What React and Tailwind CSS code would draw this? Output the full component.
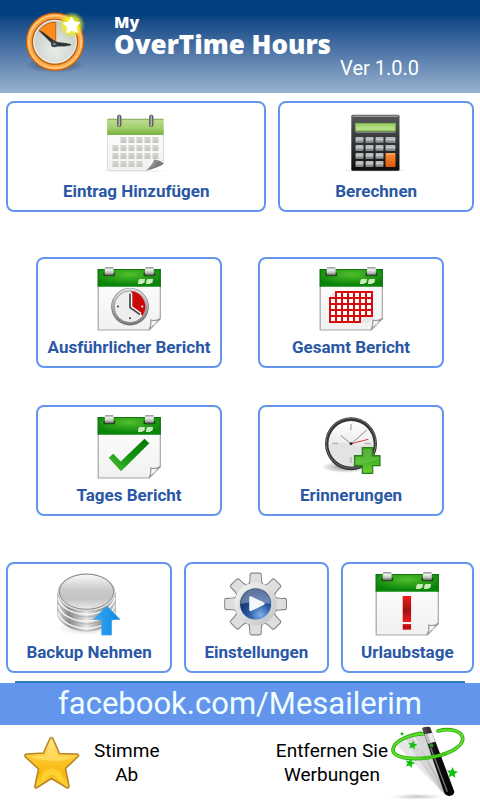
import React from "react";

const Gradients = () => (
  <svg className="absolute w-0 h-0" aria-hidden="true">
    <defs>
      <radialGradient id="greenTop" cx="50%" cy="30%" r="60%">
        <stop offset="0" stopColor="#52bf2c" />
        <stop offset="1" stopColor="#0a850a" />
      </radialGradient>
      <linearGradient id="paper" x1="0" y1="0" x2="0" y2="1">
        <stop offset="0" stopColor="#ffffff" />
        <stop offset="1" stopColor="#f1f1f1" />
      </linearGradient>
      <linearGradient id="clip" x1="0" y1="0" x2="0" y2="1">
        <stop offset="0" stopColor="#777777" />
        <stop offset="0.25" stopColor="#f2f2f2" />
        <stop offset="0.7" stopColor="#bdbdbd" />
        <stop offset="1" stopColor="#555555" />
      </linearGradient>
      <linearGradient id="check" x1="1" y1="0" x2="0" y2="1">
        <stop offset="0" stopColor="#067a06" />
        <stop offset="0.5" stopColor="#119211" />
        <stop offset="1" stopColor="#4cc236" />
      </linearGradient>
      <linearGradient id="alert" x1="0" y1="0" x2="0" y2="1">
        <stop offset="0" stopColor="#f51c1c" />
        <stop offset="0.55" stopColor="#9c1212" />
        <stop offset="1" stopColor="#f51c1c" />
      </linearGradient>
      <linearGradient id="lime" x1="0" y1="0" x2="0" y2="1">
        <stop offset="0" stopColor="#bfdc98" />
        <stop offset="0.55" stopColor="#a3cf6c" />
        <stop offset="1" stopColor="#74b43c" />
      </linearGradient>
      <linearGradient id="ring" x1="0" y1="0" x2="1" y2="0">
        <stop offset="0" stopColor="#555555" />
        <stop offset="0.5" stopColor="#c4c4c4" />
        <stop offset="1" stopColor="#4a4a4a" />
      </linearGradient>
      <linearGradient id="cell" x1="0" y1="0" x2="0" y2="1">
        <stop offset="0" stopColor="#dad6d0" />
        <stop offset="1" stopColor="#c6c4c0" />
      </linearGradient>
      <linearGradient id="darkBody" x1="0" y1="0" x2="0" y2="1">
        <stop offset="0" stopColor="#57585a" />
        <stop offset="0.5" stopColor="#333436" />
        <stop offset="1" stopColor="#0c0c0c" />
      </linearGradient>
      <linearGradient id="key" x1="0" y1="0" x2="0" y2="1">
        <stop offset="0" stopColor="#b9bbbd" />
        <stop offset="0.5" stopColor="#aaadaf" />
        <stop offset="1" stopColor="#717477" />
      </linearGradient>
      <linearGradient id="orangeKey" x1="0" y1="0" x2="0" y2="1">
        <stop offset="0" stopColor="#ff8c3a" />
        <stop offset="1" stopColor="#d95a0b" />
      </linearGradient>
      <linearGradient id="face" x1="0" y1="0" x2="0" y2="1">
        <stop offset="0" stopColor="#ffffff" />
        <stop offset="1" stopColor="#d9d9d9" />
      </linearGradient>
      <linearGradient id="rim" x1="0" y1="0" x2="0" y2="1">
        <stop offset="0" stopColor="#e4e4e4" />
        <stop offset="1" stopColor="#777777" />
      </linearGradient>
      <linearGradient id="disk" x1="0" y1="0" x2="0" y2="1">
        <stop offset="0" stopColor="#fafafa" />
        <stop offset="0.45" stopColor="#c9cacb" />
        <stop offset="0.7" stopColor="#c2c3c4" />
        <stop offset="1" stopColor="#ececec" />
      </linearGradient>
      <linearGradient id="diskSide" x1="0" y1="0" x2="1" y2="0">
        <stop offset="0" stopColor="#dcdcdc" />
        <stop offset="0.2" stopColor="#858687" />
        <stop offset="0.5" stopColor="#e8e8e8" />
        <stop offset="0.8" stopColor="#858687" />
        <stop offset="1" stopColor="#d6d6d6" />
      </linearGradient>
      <linearGradient id="blueArrow" x1="0" y1="0" x2="1" y2="0">
        <stop offset="0" stopColor="#35aaf5" />
        <stop offset="1" stopColor="#0f85e2" />
      </linearGradient>
      <linearGradient id="gear" x1="0" y1="0" x2="1" y2="1">
        <stop offset="0" stopColor="#f6f6f6" />
        <stop offset="0.5" stopColor="#dcdcdc" />
        <stop offset="1" stopColor="#c2c2c2" />
      </linearGradient>
      <radialGradient id="play" cx="65%" cy="85%" r="80%">
        <stop offset="0" stopColor="#7fb2ee" />
        <stop offset="0.45" stopColor="#2a58a2" />
        <stop offset="1" stopColor="#0d2a5e" />
      </radialGradient>
      <linearGradient id="plus" x1="0" y1="0" x2="0" y2="1">
        <stop offset="0" stopColor="#35951c" />
        <stop offset="0.5" stopColor="#44b322" />
        <stop offset="1" stopColor="#66cf35" />
      </linearGradient>
      <linearGradient id="gold" x1="0" y1="0" x2="0" y2="1">
        <stop offset="0" stopColor="#ffe98a" />
        <stop offset="0.45" stopColor="#fdc62b" />
        <stop offset="0.7" stopColor="#f9b60c" />
        <stop offset="1" stopColor="#ffd83a" />
      </linearGradient>
      <radialGradient id="glow">
        <stop offset="0" stopColor="#ffff20" />
        <stop offset="0.6" stopColor="#f0f020" stopOpacity="0.8" />
        <stop offset="1" stopColor="#c8dc30" stopOpacity="0" />
      </radialGradient>
      <radialGradient id="shade">
        <stop offset="0" stopColor="#000000" stopOpacity="0.45" />
        <stop offset="1" stopColor="#000000" stopOpacity="0" />
      </radialGradient>
      <radialGradient id="logoFace" cx="50%" cy="70%" r="70%">
        <stop offset="0" stopColor="#e9ece6" />
        <stop offset="1" stopColor="#c3c8c2" />
      </radialGradient>
      <linearGradient id="wand" x1="0" y1="0" x2="1" y2="0">
        <stop offset="0" stopColor="#555555" />
        <stop offset="0.4" stopColor="#111111" />
        <stop offset="1" stopColor="#000000" />
      </linearGradient>
      <linearGradient id="ghost" x1="0" y1="0" x2="0" y2="1">
        <stop offset="0" stopColor="#bbbbbb" stopOpacity="0.6" />
        <stop offset="1" stopColor="#999999" stopOpacity="0.35" />
      </linearGradient>
    </defs>
  </svg>
);

const Icon = ({ children }) => (
  <svg className="w-16 h-16" viewBox="0 0 64 64" aria-hidden="true">
    {children}
  </svg>
);

const LogoIcon = () => (
  <svg className="w-16 h-16 shrink-0" viewBox="0 0 64 64" aria-hidden="true">
    <ellipse cx="31" cy="55" rx="30" ry="8" fill="url(#shade)" />
    <circle cx="31" cy="31.7" r="28.6" fill="#ffa63d" stroke="#c25f10" strokeWidth="1.2" />
    <circle cx="31" cy="31.7" r="26.2" fill="none" stroke="#ffc886" strokeWidth="1.6" />
    <circle cx="31" cy="31.7" r="22.6" fill="url(#logoFace)" stroke="#bd5d14" strokeWidth="1.4" />
    <circle cx="31" cy="31.7" r="21.2" fill="none" stroke="#f3f4f0" strokeWidth="0.9" />
    <path d="M31.7 32V12.2Q22 12 15 20.5z" fill="#fb8c1c" stroke="#c4600c" strokeWidth="1" />
    <path d="M14.6 20.4l3.6 1 14.4 11.2-2.8 3z" fill="#2f3436" />
    <path d="M30 32.2l11 1.2 6 1.3-6 1.2-11 .1z" fill="#2f3436" stroke="#2f3436" />
    <circle cx="30.3" cy="34" r="3.3" fill="#3a3f41" />
    <circle cx="30.3" cy="34" r="1.3" fill="#8d9294" />
    <circle cx="47.7" cy="15" r="13.5" fill="url(#glow)" />
    <path
      d="M47.3 7l2.8 4.9 5.7.6-3.8 4.3 1.2 5.6-5.3-2.3-5 2.7.7-5.7-4.2-4 5.6-1.1z"
      fill="#fff"
      stroke="#fff"
      strokeWidth="1"
      strokeLinejoin="round"
    />
  </svg>
);

const AddEntryIcon = () => (
  <Icon>
    <ellipse cx="31" cy="59.5" rx="31" ry="1.5" fill="#f0f0f0" />
    <rect x="3.5" y="8" width="56" height="51.6" rx="1" fill="url(#paper)" stroke="#d4d4d4" strokeWidth="0.8" />
    <rect x="3.2" y="8" width="56.4" height="15.8" rx="1" fill="url(#lime)" />
    <path d="M3.4 8.4h56M3.4 23.5h56" stroke="#7aae4b" strokeWidth="0.8" />
    {[13.2, 45.2].map((x) => (
      <g key={x}>
        <rect x={x} y="3.8" width="4.2" height="12.2" rx="2" fill="#555" />
        <rect x={x + 0.6} y="4.4" width="3" height="11" rx="1.5" fill="url(#ring)" />
      </g>
    ))}
    {[
      [1, 6],
      [0, 6],
      [0, 6],
      [0, 4],
    ].map(([from, to], row) =>
      Array.from({ length: to - from }, (_, i) => (
        <rect
          key={`${row}-${i}`}
          x={8.5 + (from + i) * 8}
          y={26 + row * 8}
          width="6"
          height="6"
          fill="url(#cell)"
        />
      ))
    )}
    <path d="M41.8 59.8L60 59.8V53z" fill="#fff" />
    <path d="M41.8 59.7Q48.5 54 50.3 48.6Q56 49 59.6 52.8Q53 57.5 41.8 59.7z" fill="#8b8c8e" />
    <path d="M44 58.6Q52 55 54 50Q57.5 50.8 59.6 52.8Q53 57 44 58.6z" fill="#77787a" />
  </Icon>
);

const CalculatorIcon = () => (
  <Icon>
    <ellipse cx="31" cy="59.5" rx="31" ry="1.4" fill="#f0f0f0" />
    <rect x="7.3" y="3.7" width="48.2" height="56" rx="1.5" fill="url(#darkBody)" />
    <path d="M8.5 5.2h46" stroke="#b5b5b5" strokeWidth="1" />
    <rect x="11.5" y="12.3" width="40" height="7.8" fill="#9fd06b" stroke="#7fb04c" strokeWidth="0.8" />
    <rect x="12.5" y="15.5" width="38" height="3.4" fill="#b4dd85" />
    <path d="M12 21.3h39" stroke="#a9a9a9" strokeWidth="0.8" />
    {[26, 34, 42, 50].map((y) =>
      [11.5, 21.5, 31.5, 41.5].map((x) =>
        x === 41.5 && y > 34 ? null : (
          <g key={`${x}-${y}`}>
            <rect x={x} y={y} width={x === 41.5 ? 10 : 8} height="6" rx="0.8" fill="url(#key)" />
            <path d={`M${x + 0.5} ${y + 2.3}h${x === 41.5 ? 9 : 7}`} stroke="#d6d6d6" strokeWidth="0.8" />
          </g>
        )
      )
    )}
    <rect x="41.5" y="42" width="10" height="14" rx="0.8" fill="url(#orangeKey)" />
    <path d="M42 43h9" stroke="#ffc193" strokeWidth="0.8" />
  </Icon>
);

// Green tear-off calendar shared by the report icons
const CalendarIcon = ({ children }) => (
  <Icon>
    <path
      d="M1.2 3.5H63.3V51.5L52 63H1.2z"
      fill="url(#paper)"
      stroke="#a6a6a6"
      strokeWidth="1.2"
    />
    <path d="M0.8 2H63.7V19.8H0.8z" fill="url(#greenTop)" />
    <path d="M0.8 2.5H63.7M1.2 2V19.8M63.3 2V19.8" stroke="#0a6e0a" strokeWidth="0.8" />
    {[7.8, 48].map((x) => (
      <g key={x}>
        <rect x={x - 1.5} y="5.5" width="11.8" height="3.7" rx="1" fill="#1b4d13" />
        <rect x={x} y="0.3" width="8.8" height="8" rx="1" fill="url(#clip)" />
      </g>
    ))}
    <path d="M42.3 12h5.8l-.8 4h-1.6l-.4 1h-4.4l.6-4h.6zM50.3 12h5.8l-.8 4h-1.6l-.4 1h-4.4l.6-4h.6z" fill="#c9eabb" />
    {children}
    <path d="M52 63Q54.5 57.5 53.8 53.2Q58.5 54.5 63.3 51.5z" fill="#fdfdfd" stroke="#9b9b9b" strokeWidth="1.2" />
    <path d="M55.5 60Q57.5 57.5 56.5 55.5Q59 56 61 54z" fill="#e2e2e2" />
  </Icon>
);

const DetailReportIcon = () => (
  <CalendarIcon>
    <circle cx="33" cy="39.7" r="18.8" fill="#6e6e6e" />
    <circle cx="33" cy="39.5" r="18.2" fill="url(#rim)" />
    <circle cx="33" cy="39.7" r="15.8" fill="#eeeeee" stroke="#8a8a8a" strokeWidth="0.8" />
    <path d="M34 40V24.3A15.4 15.4 0 0 1 45.5 48.5z" fill="#cb0808" />
    <path d="M33.5 25.5V40.3L43.5 47.5" fill="none" stroke="#fff" strokeWidth="3.6" />
    <path d="M33 26.5V40.5L43 47.5" fill="none" stroke="#4c4c4c" strokeWidth="1.8" />
    <circle cx="21" cy="39.5" r="1" fill="#333" />
    <circle cx="33" cy="51.3" r="1" fill="#333" />
    <circle cx="45.3" cy="39.5" r="1" fill="#fff" />
  </CalendarIcon>
);

const TotalReportIcon = () => (
  <CalendarIcon>
    <path d="M10 30l6-6v6zM41.5 56h8l5-6h-13z" fill="#e6e6e6" />
    {[
      [1, 7],
      [0, 7],
      [0, 7],
      [0, 7],
      [0, 5],
    ].map(([from, to], row) =>
      Array.from({ length: to - from }, (_, i) => (
        <rect
          key={`${row}-${i}`}
          x={11 + (from + i) * 6}
          y={25 + row * 6}
          width="6"
          height="6"
          fill="#fff"
          stroke="#d60b0b"
          strokeWidth="2"
        />
      ))
    )}
  </CalendarIcon>
);

const DayReportIcon = () => (
  <CalendarIcon>
    <path d="M11.7 42.7L16.3 38.7L23.7 46.5L47.5 23.7L52.3 28.3L24 56.3z" fill="url(#check)" />
  </CalendarIcon>
);

const HolidayIcon = () => (
  <CalendarIcon>
    <rect x="27.7" y="24" width="8.4" height="26" fill="url(#alert)" />
    <rect x="27.7" y="52" width="8.4" height="5.8" fill="url(#alert)" />
  </CalendarIcon>
);

const ReminderIcon = () => (
  <Icon>
    <ellipse cx="26" cy="52" rx="24" ry="6" fill="url(#shade)" />
    <ellipse cx="32" cy="28.7" rx="26" ry="26.5" fill="#333333" />
    <ellipse cx="32" cy="28.2" rx="24.8" ry="25" fill="none" stroke="#707070" strokeWidth="1" />
    <circle cx="32" cy="28.7" r="22.6" fill="url(#face)" />
    <path d="M9.6 31Q20 26 32 29.5T54.4 27A22.4 22.4 0 0 1 9.6 31z" fill="#e3e3e3" />
    <path d="M32 9v6M32 42v6M13 28.5h6M45.5 28.5h6" stroke="#b5b5b5" strokeWidth="1.4" />
    <path d="M21.7 20.3L32 29L47.7 15" fill="none" stroke="#8a8a8a" strokeWidth="1" />
    <path d="M31 29L49.3 24.3" stroke="#cf4040" strokeWidth="1" />
    <circle cx="32" cy="28.7" r="1.4" fill="#222" />
    <path
      d="M43.3 32.5H53.7V40.7H61V50.7H53.7V58.3H43.3V50.7H35.5V40.7H43.3z"
      fill="url(#plus)"
      stroke="#2c7d19"
      strokeWidth="1.2"
    />
    <path d="M44.5 33.7H52.5V41.9H59.8V44Q48 49 36.7 49V41.9H44.5z" fill="#7acb5b" opacity="0.45" />
  </Icon>
);

const BackupIcon = () => (
  <Icon>
    <ellipse cx="29.5" cy="56" rx="29" ry="7" fill="url(#shade)" opacity="0.4" />
    {[41, 34, 27].map((y) => (
      <g key={y}>
        <path
          d={`M0.6 ${y - 6}V${y + 1}A29 18.5 0 0 0 58.4 ${y + 1}V${y - 6}z`}
          fill="url(#diskSide)"
          stroke="#a8a8a8"
          strokeWidth="0.7"
        />
        <path d={`M1.2 ${y - 1}A28.5 18.5 0 0 0 57.8 ${y - 1}`} fill="none" stroke="#f6f6f6" strokeWidth="1.4" />
      </g>
    ))}
    <ellipse cx="29.5" cy="20.5" rx="28.6" ry="18.6" fill="#e9e9e9" stroke="#bdbdbd" strokeWidth="0.7" />
    <ellipse cx="29.5" cy="19.7" rx="27.2" ry="17.6" fill="url(#disk)" stroke="#858585" strokeWidth="1" />
    <path
      d="M49.8 34L63 47.5H54.5V63H44.8V47.5H36.8z"
      fill="url(#blueArrow)"
      stroke="#3f9fe6"
      strokeWidth="0.8"
    />
  </Icon>
);

const SettingsIcon = () => (
  <Icon>
    {[0, 45, 90, 135, 180, 225, 270, 315].map((angle) => (
      <path
        key={angle}
        d="M24 14Q26.5 11 26 3Q26 1.2 28 1.2H35.5Q37.3 1.2 37.3 3Q37 11 39.5 14z"
        transform={`rotate(${angle} 31.6 32)`}
        fill="#e2e2e2"
        stroke="#858585"
        strokeWidth="1.2"
      />
    ))}
    <circle cx="31.6" cy="32" r="21.5" fill="none" stroke="#858585" strokeWidth="0.6" />
    {[0, 45, 90, 135, 180, 225, 270, 315].map((angle) => (
      <path
        key={angle}
        d="M24.9 15Q27 11 26.7 3Q26.7 1.9 28 1.9H35.3Q36.7 1.9 36.7 3Q36.5 11 38.6 15z"
        transform={`rotate(${angle} 31.6 32)`}
        fill="#dedede"
      />
    ))}
    <circle cx="31.6" cy="32" r="21.3" fill="url(#gear)" />
    <circle cx="31.6" cy="32" r="16.3" fill="#c4ccd8" />
    <circle cx="31.6" cy="32" r="15.5" fill="url(#play)" />
    <path d="M16.6 32A15 15 0 0 1 46.6 32Q32 28 16.6 32z" fill="#c5d3e8" opacity="0.45" />
    <path
      d="M26.5 25.5L39.5 31.7L26.5 38z"
      fill="#f4f6fa"
      stroke="#f4f6fa"
      strokeWidth="2.5"
      strokeLinejoin="round"
    />
  </Icon>
);

const StarIcon = () => (
  <svg className="w-14 h-14 shrink-0" viewBox="0 0 56 56" aria-hidden="true">
    <path
      d="M27.5 2.5Q29 3 30 6L35.5 18.5L53 19Q56 19.6 53.5 22L41.5 33.5L45 51Q45 54 42.5 52.5L27.5 43.5L13 52.5Q10.5 54 11 51L14.5 34L1.5 22Q0 19.6 2.5 19L19.5 18L25 5.5Q26 2.6 27.5 2.5z"
      fill="url(#gold)"
      stroke="#b98328"
      strokeWidth="1.6"
    />
    <path d="M27.5 7L33.5 21L49 21.5Q40 27 27 26T6 21.5L21.5 20.5z" fill="#ffe678" opacity="0.55" />
    <path d="M17 47L19 37L27.5 33L37 37L39.5 47L27.5 39.5z" fill="#ffe04a" opacity="0.6" />
  </svg>
);

const WandIcon = () => (
  <svg className="w-19 h-[75px] shrink-0" viewBox="450 150 228 225" aria-hidden="true">
    <ellipse cx="530" cy="365" rx="78" ry="9" fill="url(#shade)" opacity="0.5" />
    <path d="M468 208L490 192L618 352L600 345z" fill="url(#ghost)" opacity="0.6" />
    <path d="M492 190L514 176L624 352L604 350z" fill="url(#ghost)" />
    <path d="M518 174L545 164L632 352L608 354z" fill="url(#ghost)" />
    <path
      d="M552 176C505 178 460 200 459 224C458 250 520 256 578 246C632 236 672 212 668 188C664 168 630 158 594 168"
      fill="none"
      stroke="#2aa80e"
      strokeWidth="11"
      strokeLinecap="round"
    />
    <path
      d="M552 176C505 178 460 200 459 224C458 250 520 256 578 246C632 236 672 212 668 188C664 168 630 158 594 168"
      fill="none"
      stroke="#5fe02a"
      strokeWidth="6"
      strokeLinecap="round"
    />
    <path d="M546 160Q550 153 570 156L643 350Q642 361 628 363Q618 362 614 357z" fill="url(#wand)" />
    <path d="M554 178L577 173L586 200L564 206z" fill="#e9e9e9" />
    <path d="M554 178L563 176L572 204L564 206z" fill="#bcbcbc" />
    <path d="M572 218L622 350" stroke="#777" strokeWidth="4" />
    <path d="M545 251Q590 246 620 234" fill="none" stroke="#44c81c" strokeWidth="10" />
    {[
      "translate(518 210) scale(1.3) rotate(10)",
      "translate(510 264) scale(1.4) rotate(15)",
      "translate(637 293) scale(1.6) rotate(5)",
      "translate(486 176) scale(0.6)",
      "translate(575 211) scale(0.7)",
    ].map((t) => (
      <path
        key={t}
        transform={t}
        d="M0 -10.5L3 -3.6L10.5 -3L4.8 2L6.5 9.5L0 5.5L-6.5 9.5L-4.8 2L-10.5 -3L-3 -3.6z"
        fill="#12c012"
      />
    ))}
  </svg>
);

const MenuButton = ({ icon, label, className }) => (
  <button
    type="button"
    className={`flex flex-col items-center rounded-lg border-2 border-[#6495ed] bg-white pt-2 pb-[7px] text-[17px] leading-6 font-bold text-[#2a57a5] ${className}`}
  >
    {icon}
    <span className="mt-1 whitespace-nowrap">{label}</span>
  </button>
);

const App = () => {
  return (
    <div className="bg-white font-[Roboto,sans-serif]">
      <Gradients />
      <header className="flex bg-linear-to-b from-[#004080] from-15% to-[#9ab3d0] pt-[10px] pb-[11px] pl-6 text-white">
        <LogoIcon />
        <div className="flex flex-1 flex-col pl-[26px] pr-[61px]">
          <h1 className="flex flex-col font-['Open_Sans',sans-serif] font-extrabold">
            <span className="text-base leading-6">My</span>
            <span className="text-[26px] leading-5 whitespace-nowrap">OverTime Hours</span>
          </h1>
          <span className="self-end text-xl leading-7">Ver 1.0.0</span>
        </div>
      </header>

      <main>
        <div className="flex gap-3 px-[6px] pt-2">
          <MenuButton className="flex-auto" icon={<AddEntryIcon />} label="Eintrag Hinzufügen" />
          <MenuButton className="flex-auto" icon={<CalculatorIcon />} label="Berechnen" />
        </div>

        <div className="grid grid-cols-2 gap-x-9 gap-y-[37px] px-9 pt-[45px] pb-[46px]">
          <MenuButton icon={<DetailReportIcon />} label="Ausführlicher Bericht" />
          <MenuButton icon={<TotalReportIcon />} label="Gesamt Bericht" />
          <MenuButton icon={<DayReportIcon />} label="Tages Bericht" />
          <MenuButton icon={<ReminderIcon />} label="Erinnerungen" />
        </div>

        <div className="flex gap-3 px-[6px] pb-2">
          <MenuButton className="flex-auto" icon={<BackupIcon />} label="Backup Nehmen" />
          <MenuButton className="flex-auto" icon={<SettingsIcon />} label="Einstellungen" />
          <MenuButton className="flex-auto" icon={<HolidayIcon />} label="Urlaubstage" />
        </div>
      </main>

      <hr className="mx-[15px] border-t-2 border-[#2b7bbd]" />
      <a
        href="https://facebook.com/Mesailerim"
        className="block bg-[#6495ed] text-center text-[31px] leading-[42px] text-[#f0ffff]"
      >
        facebook.com/Mesailerim
      </a>

      <footer className="flex items-center justify-between pl-6 pr-[14px] text-[19px] leading-6 text-black">
        <button type="button" className="flex items-center gap-[14px]">
          <StarIcon />
          <span>
            Stimme
            <br />
            Ab
          </span>
        </button>
        <button type="button" className="flex items-center gap-[2px]">
          <span>
            Entfernen Sie
            <br />
            Werbungen
          </span>
          <WandIcon />
        </button>
      </footer>
    </div>
  );
};

export default App;
